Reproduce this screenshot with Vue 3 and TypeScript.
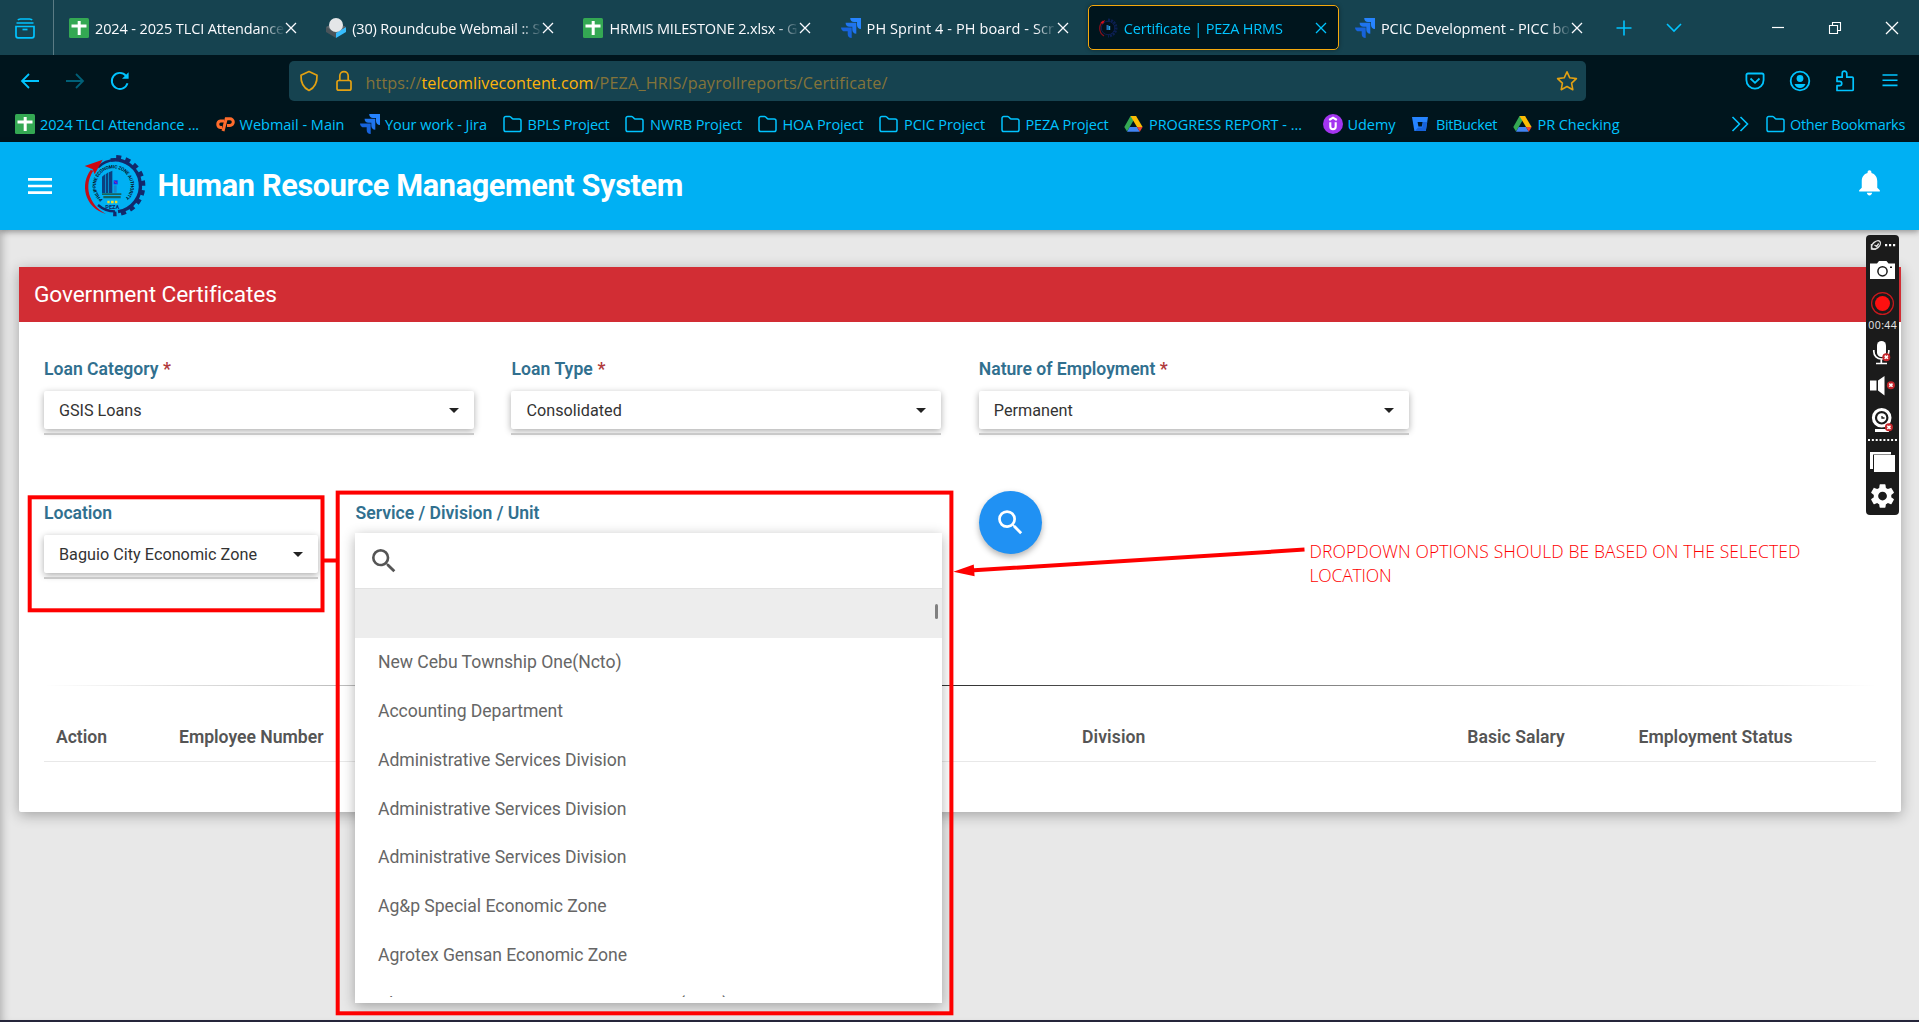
<script setup lang="ts">
import type { Directive } from 'vue'

type IconName = 'sheet' | 'cube' | 'jira' | 'seal' | 'cpanel' | 'folder' | 'drive' | 'udemy' | 'bitbucket'

interface Tab { icon: IconName; title: string; width: number; active?: boolean }
interface Bookmark { icon: IconName; label: string; width: number; extra?: number }
interface Field { label: string; labelWidth: number; value: string; valueWidth: number }

/* Tracks a text run so that it fills the given width. */
const vFit: Directive<HTMLElement, number> = {
  mounted(el, binding) {
    const count = (el.textContent ?? '').length
    const natural = el.getBoundingClientRect().width
    if (count > 0) el.style.letterSpacing = `${(binding.value - natural) / count}px`
  },
}

const tabs: Tab[] = [
  { icon: 'sheet', title: '2024 - 2025 TLCI Attendance', width: 189 },
  { icon: 'cube', title: '(30) Roundcube Webmail :: S', width: 188 },
  { icon: 'sheet', title: 'HRMIS MILESTONE 2.xlsx - G', width: 188 },
  { icon: 'jira', title: 'PH Sprint 4 - PH board - Scr', width: 187.5 },
  { icon: 'seal', title: 'Certificate | PEZA HRMS', width: 159, active: true },
  { icon: 'jira', title: 'PCIC Development - PICC bo', width: 189 },
]

const bookmarks: Bookmark[] = [
  { icon: 'sheet', label: '2024 TLCI Attendance ...', width: 159 },
  { icon: 'cpanel', label: 'Webmail - Main', width: 105 },
  { icon: 'jira', label: 'Your work - Jira', width: 102 },
  { icon: 'folder', label: 'BPLS Project', width: 82 },
  { icon: 'folder', label: 'NWRB Project', width: 92 },
  { icon: 'folder', label: 'HOA Project', width: 81 },
  { icon: 'folder', label: 'PCIC Project', width: 81 },
  { icon: 'folder', label: 'PEZA Project', width: 83 },
  { icon: 'drive', label: 'PROGRESS REPORT - ...', width: 153, extra: 5 },
  { icon: 'udemy', label: 'Udemy', width: 48 },
  { icon: 'bitbucket', label: 'BitBucket', width: 61 },
  { icon: 'drive', label: 'PR Checking', width: 82 },
]

const loanFields: Field[] = [
  { label: 'Loan Category', labelWidth: 114.5, value: 'GSIS Loans', valueWidth: 82.5 },
  { label: 'Loan Type', labelWidth: 81.5, value: 'Consolidated', valueWidth: 95.5 },
  { label: 'Nature of Employment', labelWidth: 176.5, value: 'Permanent', valueWidth: 79 },
]

const options = [
  { text: 'New Cebu Township One(Ncto)', width: 243.5 },
  { text: 'Accounting Department', width: 185 },
  { text: 'Administrative Services Division', width: 248.5 },
  { text: 'Administrative Services Division', width: 248.5 },
  { text: 'Administrative Services Division', width: 248.5 },
  { text: 'Ag&p Special Economic Zone', width: 228.5 },
  { text: 'Agrotex Gensan Economic Zone', width: 249 },
  { text: 'Alaminos Economic Zone Services Area (Aeza)', width: 350 },
]

const columns = [
  { name: 'Action', width: 51 },
  { name: 'Employee Number', width: 144.5 },
  { name: 'Division', width: 63.5 },
  { name: 'Basic Salary', width: 97.5 },
  { name: 'Employment Status', width: 154 },
]
</script>

<template>
  <svg class="defs" width="0" height="0">
    <symbol id="i-sheet" viewBox="0 0 20 20"><rect width="20" height="20" rx="1.5" fill="#34a853" /><path d="M2.5 6.5h15v3h-15zM8.700 3h3v14h-3z" fill="#fff" /></symbol>
    <symbol id="i-cube" viewBox="0 0 20 20"><path d="M0 9l10 5v6L0 14z" fill="#4a545a" /><path d="M20 9l-10 5v6l10-6z" fill="#37beff" /><path d="M0 9l10-5 10 5-10 6z" fill="#5c666c" /><circle cx="10" cy="7" r="7" fill="#e4e6e8" /></symbol>
    <symbol id="i-jira" viewBox="0 0 20 20"><path d="M9.200 0H20v11c-2.600 0-4-1.700-4-4V4h-3C10.800 4 9.200 2.400 9.200 0z" fill="#2684ff" /><path d="M4.600 4.700h10.700v11c-2.500 0-4-1.700-4-4v-3H8.500c-2.400 0-3.900-1.600-3.900-4z" fill="#1f74ee" /><path d="M0 9.400h10.700V20c-2.500 0-4-1.500-4-4v-2.700H4c-2.400 0-4-1.500-4-3.900z" fill="#1763db" /></symbol>
    <symbol id="i-seal" viewBox="0 0 20 20"><path d="M10 2a8 8 0 0 1 0 16" fill="none" stroke="#0b1f52" stroke-width="3" stroke-dasharray="2 1" /><circle cx="10" cy="10" r="6.700" fill="#021018" stroke="#0b1f52" stroke-width="1" /><path d="M5 3C0 8 1 15 6 18" fill="none" stroke="#8f0f1c" stroke-width="1.200" /><path d="M2.500 4.500L7 2 5 6z" fill="#d5101c" /><path d="M8.500 7h2v5h-2z" fill="#1c6fb9" /><path d="M10.500 8h1.700v4h-1.700z" fill="#2fa4dd" /></symbol>
    <symbol id="i-cpanel" viewBox="0 0 20 20"><g fill="none" stroke="#ff6c2c" stroke-width="3"><path d="M9 7H5.500a3.300 3.300 0 0 0 0 6.500H7" /><path d="M8 17l3.200-12.200H15a3.300 3.300 0 0 1 0 6.600h-3" /></g></symbol>
    <symbol id="i-folder" viewBox="0 0 20 20"><path d="M1 15.700V4.300A1.800 1.800 0 0 1 2.800 2.500h3.800c1.900 0 1.900 2.500 3.800 2.500H16.200a1.800 1.800 0 0 1 1.800 1.800v8.900a1.800 1.800 0 0 1-1.800 1.800H2.800A1.800 1.800 0 0 1 1 15.700z" fill="none" stroke="#00c4ff" stroke-width="1.500" /></symbol>
    <symbol id="i-drive" viewBox="0 0 20 20"><path d="M6.500 2h5.600L5.700 13 3 17.600.3 13z" fill="#34a853" /><path d="M6.500 2h5.600l6.500 11h-5.600z" fill="#fbbc04" /><path d="M5.700 13h7.300l2.800 4.800H3z" fill="#4285f4" /><path d="M13 13h5.600l-2.800 4.800z" fill="#ea4335" /></symbol>
    <symbol id="i-udemy" viewBox="0 0 20 20"><circle cx="10" cy="10" r="10" fill="#a435f0" /><path d="M6.200 6L10 3.700 13.800 6M7.300 8.300v4.200a2.700 2.700 0 0 0 5.400 0V8.300" fill="none" stroke="#fff" stroke-width="2.100" /></symbol>
    <symbol id="i-bitbucket" viewBox="0 0 20 20"><path d="M1 3h16l-2.200 14H3.400z" fill="#2684ff" /><path d="M12 8h4.200l-1.400 9H4l3-3.500h4.200z" fill="#1763db" /><path d="M6.600 8h5l-.8 4.600H7.400z" fill="#00151d" /></symbol>
    <symbol id="i-search" viewBox="0 0 24 24"><path d="M15.500 14h-.79l-.28-.27A6.471 6.471 0 0 0 16 9.500 6.500 6.500 0 1 0 9.500 16c1.610 0 3.090-.59 4.230-1.570l.27.28v.79l5 4.990L20.490 19l-4.990-5zm-6 0C7.010 14 5 11.990 5 9.500S7.010 5 9.500 5 14 7.010 14 9.500 11.990 14 9.500 14z" fill="currentColor" /></symbol>
    <symbol id="i-close" viewBox="0 0 12 12"><path d="M1 1l10 10M11 1L1 11" fill="none" stroke="currentColor" stroke-width="1.300" /></symbol>
  </svg>

  <div class="screen">
    <div class="tabstrip">
      <div class="view-button">
        <svg width="22" height="22" viewBox="0 0 22 22" fill="none" stroke="#00c4ff" stroke-width="1.700"><path d="M4 2.200C4.500 1 5.500 1 6.500 1h9c1 0 2 0 2.500 1.200M2.500 5h17M2 8.500h18v9.300a2 2 0 0 1-2 2H4a2 2 0 0 1-2-2z" /><path d="M8.500 11.500h5" /></svg>
      </div>
      <div v-for="tab in tabs" :key="tab.title" class="tab" :class="{ active: tab.active }">
        <svg class="favicon" width="20" height="20"><use :href="'#i-' + tab.icon" /></svg>
        <div class="tab-title"><span v-fit="tab.width">{{ tab.title }}</span></div>
        <svg class="tab-close" width="12" height="12"><use href="#i-close" /></svg>
      </div>
      <svg class="new-tab" width="16" height="16" viewBox="0 0 16 16"><path d="M8 .5v15M.5 8h15" stroke="#00c4ff" stroke-width="1.600" /></svg>
      <svg class="tab-list" width="16" height="16" viewBox="0 0 16 16"><path d="M1 4l7 7 7-7" fill="none" stroke="#00c4ff" stroke-width="1.600" /></svg>
      <div class="window-controls">
        <svg width="14" height="14" viewBox="0 0 14 14"><path d="M1 6.500h12" stroke="#fff" stroke-width="1.200" /></svg>
        <svg width="14" height="14" viewBox="0 0 14 14"><path d="M1.500 4.500h8v8h-8zM4.500 4.500v-3h8v8h-3" fill="none" stroke="#fff" stroke-width="1.100" /></svg>
        <svg width="14" height="14" viewBox="0 0 14 14"><path d="M1 1l12 12M13 1L1 13" stroke="#fff" stroke-width="1.300" /></svg>
      </div>
    </div>

    <div class="toolbar">
      <div class="nav-buttons">
        <svg width="20" height="20" viewBox="0 0 20 20" fill="none" stroke="#00c4ff" stroke-width="1.800"><path d="M9 3L2 10l7 7M2 10h17" /></svg>
        <svg width="20" height="20" viewBox="0 0 20 20" fill="none" stroke="#006078" stroke-width="1.800"><path d="M11 3l7 7-7 7M18 10H1" /></svg>
        <svg width="20" height="20" viewBox="0 0 20 20" fill="none" stroke="#00c4ff" stroke-width="1.900"><path d="M17.500 12.200A8 8 0 1 1 16 4.800" /><path d="M18.600 1.200v6.600H12z" fill="#00c4ff" stroke="none" /></svg>
      </div>
      <div class="urlbar">
        <svg width="20" height="22" viewBox="0 0 20 22" fill="none" stroke="#e3a112" stroke-width="1.700"><path d="M10 1.500l8 3.700c.3 7-2 12.300-8 15.300C4 17.500 1.700 12.200 2 5.200z" stroke-linejoin="round" /></svg>
        <svg width="18" height="22" viewBox="0 0 18 22" fill="none" stroke="#e3a112" stroke-width="1.700"><rect x="2" y="10.500" width="14" height="9.700" rx="1.800" /><path d="M4.800 10.500V5.800a4.200 4.200 0 0 1 8.400 0v4.700" /></svg>
        <div class="url"><span v-fit="56">https://</span><span v-fit="172" class="host">telcomlivecontent.com</span><span v-fit="294">/PEZA_HRIS/payrollreports/Certificate/</span></div>
        <svg class="star" width="22" height="22" viewBox="0 0 22 22"><path d="M11 1.800l2.800 6 6.600.8-4.800 4.500 1.200 6.600L11 16.500l-5.800 3.200 1.200-6.600L1.600 8.600l6.600-.8z" fill="none" stroke="#e3a112" stroke-width="1.600" stroke-linejoin="round" /></svg>
      </div>
      <div class="tool-buttons">
        <svg width="22" height="22" viewBox="0 0 22 22" fill="none" stroke="#00c4ff" stroke-width="1.800"><path d="M4 3.500h14a1.600 1.600 0 0 1 1.600 1.600V10a8.600 8.600 0 0 1-17.200 0V5.100A1.600 1.600 0 0 1 4 3.500z" /><path d="M6.500 8.500l4.500 4.300 4.500-4.300" /></svg>
        <svg width="22" height="22" viewBox="0 0 22 22"><circle cx="11" cy="11" r="9.300" fill="none" stroke="#00c4ff" stroke-width="1.800" /><circle cx="11" cy="8.500" r="3.400" fill="#00c4ff" /><path d="M5.500 14h11c-1 2.600-3 4-5.500 4s-4.500-1.400-5.500-4z" fill="#00c4ff" /></svg>
        <svg width="22" height="22" viewBox="0 0 22 22" fill="none" stroke="#00c4ff" stroke-width="1.700"><path d="M3 20.500v-4.800h2.600a2.100 2.100 0 0 0 0-4.300H3V7.200h5.200V3.500a2.300 2.300 0 0 1 4.600 0v3.700h5.400a1 1 0 0 1 1 1v11.300a1 1 0 0 1-1 1z" stroke-linejoin="round" /></svg>
        <svg width="22" height="22" viewBox="0 0 22 22"><path d="M3.500 5h15M3.500 10.200h15M3.500 15.400h15" stroke="#00c4ff" stroke-width="1.600" /></svg>
      </div>
    </div>

    <div class="bookmarks">
      <div v-for="mark in bookmarks" :key="mark.label" class="bookmark" :style="{ marginRight: 15.5 + (mark.extra ?? 0) + 'px' }">
        <svg width="20" height="20"><use :href="'#i-' + mark.icon" /></svg>
        <span v-fit="mark.width">{{ mark.label }}</span>
      </div>
      <svg class="more" width="18" height="18" viewBox="0 0 18 18"><path d="M1.500 2l7 7-7 7M9.500 2l7 7-7 7" fill="none" stroke="#00c4ff" stroke-width="1.600" /></svg>
      <div class="bookmark">
        <svg width="20" height="20"><use href="#i-folder" /></svg>
        <span v-fit="115">Other Bookmarks</span>
      </div>
    </div>

    <header class="app-header">
      <svg class="menu" width="32" height="32" viewBox="0 0 24 24"><path d="M3 18h18v-2H3v2zm0-5h18v-2H3v2zm0-7v2h18V6H3z" fill="#fff" /></svg>
      <svg class="seal" width="76" height="76" viewBox="0 0 228 228">
        <path d="M98 36A78 78 0 0 1 120 191" fill="none" stroke="#12296b" stroke-width="10" />
        <path d="M110 28A85 85 0 1 1 110 198" fill="none" stroke="#12296b" stroke-width="14" stroke-dasharray="15 13.500" transform="rotate(3 111 113)" />
        <path d="M60 58A77 77 0 0 1 111 36M111 190A77 77 0 0 1 60 171" fill="none" stroke="#12296b" stroke-width="7" />
        <path d="M38 66C6 108 18 178 84 198 30 168 17 112 46 68z" fill="#c40d17" />
        <path d="M20 54L74 35 50 79 44 64z" fill="#d0070f" />
        <path id="seal-arc" d="M74 154A52 52 0 1 1 138 154" fill="none" />
        <text class="seal-ring"><textPath href="#seal-arc" textLength="252">PHILIPPINE ECONOMIC ZONE AUTHORITY</textPath></text>
        <path d="M72 86l9-7v56h-9zM83 79l8-6v62h-8zM93 73l10-5v67H93z" fill="#0b4080" />
        <path d="M107 112h9v22h-9z" fill="#1788cf" />
        <path d="M107 97h12v12h-12z" fill="#1a28ef" /><path d="M110 100l6 6" stroke="#f2304a" stroke-width="3" />
        <path d="M72 136h58v5H72zM76 144h52v7H76z" fill="#19635c" />
        <path d="M88 162h7M99 162h8M111 162h7" stroke="#f0db2a" stroke-width="7" />
        <text class="seal-name" x="82" y="184" textLength="42">PEZA</text>
      </svg>
      <h1><span v-fit="525.500">Human Resource Management System</span></h1>
      <svg class="bell" width="31" height="31" viewBox="0 0 24 24"><path d="M12 22c1.100 0 2-.9 2-2h-4c0 1.100.89 2 2 2zm6-6v-5c0-3.070-1.640-5.640-4.500-6.320V4c0-.83-.67-1.500-1.500-1.500s-1.500.67-1.500 1.500v.68C7.630 5.360 6 7.920 6 11v5l-2 2v1h16v-1l-2-2z" fill="#fff" /></svg>
    </header>

    <main class="page">
      <section class="card">
        <div class="card-title"><span v-fit="242">Government Certificates</span></div>
        <div class="form-row">
          <div v-for="field in loanFields" :key="field.label" class="field">
            <div class="label"><span v-fit="field.labelWidth">{{ field.label }}</span><i>*</i></div>
            <div class="select"><span v-fit="field.valueWidth">{{ field.value }}</span><b class="caret" /></div>
            <div class="underline" />
          </div>
        </div>
        <div class="form-row second">
          <div class="field location">
            <div class="label"><span v-fit="68">Location</span></div>
            <div class="select"><span v-fit="198">Baguio City Economic Zone</span><b class="caret" /></div>
            <div class="underline" />
          </div>
          <div class="field service">
            <div class="label"><span v-fit="184">Service / Division / Unit</span></div>
            <div class="dropdown">
              <div class="filter"><svg width="32" height="32"><use href="#i-search" /></svg></div>
              <div class="options">
                <div class="option blank"><div class="thumb" /></div>
                <div v-for="(option, n) in options" :key="n" class="option"><span v-fit="option.width">{{ option.text }}</span></div>
              </div>
            </div>
          </div>
          <button class="go" type="button"><svg width="33" height="33"><use href="#i-search" /></svg></button>
        </div>
        <div class="divider" />
        <div class="thead">
          <div v-for="column in columns" :key="column.name" class="th">
            <span v-fit="column.width">{{ column.name }}</span>
          </div>
        </div>
      </section>
    </main>
    <div class="taskbar-edge" />

    <svg class="markup" width="1919" height="1022" viewBox="0 0 1919 1022">
      <g fill="none" stroke="#fe0000" stroke-width="4">
        <rect x="29.700" y="497.300" width="292.800" height="113" />
        <rect x="337.700" y="492.600" width="613.700" height="520.700" />
        <path d="M322 560.500h15M970 570.600L1304.500 549.600" />
      </g>
      <path d="M953.300 571.700l20.500-7.200.8 11.700z" fill="#fe0000" />
    </svg>
    <div class="note"><span v-fit="491">DROPDOWN OPTIONS SHOULD BE BASED ON THE SELECTED</span><br><span v-fit="82">LOCATION</span></div>

    <svg class="recorder" width="33" height="280" viewBox="1866 235 33 280">
      <rect x="1866" y="235" width="33" height="280" rx="4" fill="#1b1b1b" />
      <g fill="none" stroke="#ddd" stroke-width="1.400"><ellipse cx="1876" cy="245" rx="5.200" ry="3.200" transform="rotate(-42 1876 245)" /><path d="M1871.500 244v5h4.500M1874.500 245l2.200 1.500 2-3" /></g>
      <path d="M1885 244h2.200v2.200h-2.200zm4 0h2.200v2.200h-2.200zm4 0h2.200v2.200h-2.200z" fill="#fff" />
      <path d="M1870 263.500h7l2-2.500h7.500l2 2.500h6.500V279h-25z" fill="#fff" /><circle cx="1882.500" cy="271.300" r="4.600" fill="#fff" stroke="#1b1b1b" stroke-width="1.500" /><path d="M1890 266.500h2v1.500h-2z" fill="#1b1b1b" />
      <circle cx="1882.500" cy="303.500" r="10.900" fill="none" stroke="#c9191c" stroke-width="1.200" /><circle cx="1882.500" cy="303.500" r="7.500" fill="#fe1010" />
      <text x="1868.300" y="329" textLength="28.500" class="time">00:44</text>
      <rect x="1877" y="341" width="9" height="16" rx="4.500" fill="#fff" /><path d="M1873.800 350v1.500a7.500 7.500 0 0 0 15 0V350M1881.300 358.500v5M1876 363.500h11" fill="none" stroke="#fff" stroke-width="1.700" />
      <path d="M1870 380.500h6.500v10h-6.500zM1878 380.500l6.500-4.500v19.500l-6.500-5z" fill="#fff" />
      <circle cx="1881.700" cy="417.800" r="8.300" fill="none" stroke="#fff" stroke-width="3" /><circle cx="1881.700" cy="417.800" r="4.600" fill="#fff" /><path d="M1882 416v2h2.500" fill="none" stroke="#1b1b1b" stroke-width="1.300" /><path d="M1875 429h14v3h-14z" fill="#fff" />
      <g v-for="badge in [[1886.300, 357.200], [1890.900, 385.200], [1888.900, 427.300]]" :key="badge[0]" :transform="`translate(${badge[0]} ${badge[1]})`">
        <circle r="4" fill="#c4262b" /><path d="M-1.600-1.600l3.200 3.200M1.600-1.600l-3.200 3.200" stroke="#fff" stroke-width="1.500" />
      </g>
      <path d="M1868 440h29" stroke="#fff" stroke-width="2" stroke-dasharray="2 1.850" />
      <path d="M1870 452h21v2.500h-18V469h-3z" fill="#fff" /><path d="M1874 455h21v17h-21z" fill="#fff" />
      <path transform="translate(1867.900 481.400) scale(1.220)" fill="#fff" d="M19.140 12.940c.04-.3.06-.61.06-.94 0-.32-.02-.64-.07-.94l2.030-1.580a.49.49 0 0 0 .12-.61l-1.920-3.320a.488.488 0 0 0-.59-.22l-2.390.96c-.5-.38-1.030-.7-1.620-.94l-.36-2.540a.484.484 0 0 0-.48-.41h-3.840c-.24 0-.43.17-.47.41l-.36 2.540c-.59.24-1.130.57-1.620.94l-2.390-.96c-.22-.08-.47 0-.59.22L2.740 8.870c-.12.21-.08.47.12.61l2.030 1.580c-.05.3-.09.63-.09.94s.02.64.07.94l-2.030 1.580a.49.49 0 0 0-.12.61l1.920 3.320c.12.22.37.29.59.22l2.390-.96c.5.38 1.030.7 1.620.94l.36 2.540c.05.24.24.41.48.41h3.840c.24 0 .44-.17.47-.41l.36-2.540c.59-.24 1.130-.56 1.620-.94l2.390.96c.22.08.47 0 .59-.22l1.920-3.320c.12-.22.07-.47-.12-.61l-2.010-1.580zM12 15.600c-1.980 0-3.600-1.620-3.600-3.600s1.620-3.600 3.600-3.600 3.600 1.620 3.600 3.600-1.620 3.600-3.600 3.600z" />
    </svg>
  </div>
</template>

<style>
body { margin: 0; overflow: hidden; }
</style>

<style scoped>
* { box-sizing: border-box; }
svg { display: block; flex: none; }
.defs { position: absolute; }
.screen {
  position: relative;
  display: flex;
  flex-direction: column;
  width: 1919px;
  height: 1022px;
  overflow: hidden;
  background: #e8e8e8;
  font-family: Roboto, sans-serif;
  white-space: nowrap;
}
.tabstrip, .toolbar, .bookmarks { display: flex; flex: none; align-items: center; font-family: "Open Sans", "Noto Sans", sans-serif; }

.tabstrip { height: 55px; background: #164350; color: #fbfbfe; font-size: 14.500px; }
.view-button { display: flex; align-items: center; width: 54px; height: 55px; padding: 2px 0 0 14px; margin-right: 5px; border-right: 1px solid #5b7b84; }
.tab { display: flex; flex: none; align-items: center; width: 251px; height: 45px; margin-right: 6.200px; padding-left: 9px; border: 1px solid transparent; border-radius: 5px; }
.tab.active { border-color: #f5a90c; background: #00151d; color: #00c4ff; box-shadow: 0 0 4px rgba(0, 0, 0, .4); }
.tab-title { width: 190px; margin-left: 6px; padding-top: 2px; line-height: 24px; -webkit-mask-image: linear-gradient(90deg, #000 168px, transparent 190px); mask-image: linear-gradient(90deg, #000 168px, transparent 190px); }
.tab-close { margin-top: 1px; }
.tab.active .tab-close { margin-left: 1px; }
.new-tab { margin-left: 13.500px; }
.tab-list { margin-left: 34px; }
.window-controls { display: flex; gap: 43px; margin: 0 20px 0 auto; }

.toolbar { height: 52px; background: #00151d; }
.nav-buttons { display: flex; gap: 25px; width: 289px; padding-left: 20px; }
.urlbar { display: flex; align-items: center; width: 1297px; height: 40px; padding-left: 10px; border-radius: 5px; background: #164350; }
.urlbar svg + svg { margin-left: 16px; }
.url { margin: 3px 0 0 12.500px; font-size: 16.200px; line-height: 24px; color: #84743a; }
.host { color: #fdb30b; }
.urlbar .star { margin: 0 8.500px 0 auto; }
.tool-buttons { display: flex; gap: 23px; margin-left: 158px; }

.bookmarks { height: 35px; padding: 0 14px 1px 15px; background: #00151d; color: #00c4ff; font-size: 14.500px; }
.bookmark { display: flex; align-items: center; gap: 5px; }
.bookmark:last-child { gap: 4px; }
.bookmark span { padding-top: 1px; line-height: 24px; }
.more { margin: 0 17px 0 auto; }

.app-header { position: relative; z-index: 1; display: flex; flex: none; align-items: center; height: 88px; background: #00b0f3; box-shadow: 0 2px 6px rgba(0, 0, 0, .35); }
.menu { margin-left: 24px; }
.seal { margin-left: 22px; }
.seal-ring { font: 700 14px Roboto, sans-serif; fill: #07131f; }
.seal-name { font: 700 17px Roboto, sans-serif; fill: #0b2868; }
h1 { margin: 0 0 0 3.500px; color: #fff; font-size: 30.700px; font-weight: 700; line-height: 40px; }
.bell { margin: 0 34.500px 7px auto; }

.page { flex: 1; padding: 37px 18px 0 19px; box-shadow: inset 8px 0 8px -6px rgba(0, 0, 0, .25); }
.card { height: 545px; border-radius: 2px; background: #fff; box-shadow: 0 3px 14px rgba(0, 0, 0, .3); }
.card-title { height: 55px; padding-left: 15px; background: #d22d34; color: #fff; font-size: 22.700px; line-height: 55px; }
.form-row { display: flex; padding: 34px 0 0 25px; }
.form-row.second { padding-top: 65px; }
.field { width: 430px; margin-right: 37.400px; }
.label { height: 35px; color: #31708f; font-size: 17.600px; font-weight: 600; line-height: 26px; }
.label i { margin-left: 4.500px; color: #b03a3c; font-style: normal; }
.select { display: flex; align-items: center; justify-content: space-between; height: 38px; padding: 0 15px; border-radius: 2px; background: #fff; box-shadow: 0 2px 7px rgba(0, 0, 0, .33); color: #333; font-size: 16.200px; }
.caret { width: 0; border: 5.500px solid transparent; border-top-color: #222; border-bottom: 0; }
.underline { position: relative; height: 2px; margin-top: 4px; background: #c9c9c9; }
.location { width: 274px; margin-right: 37.500px; }
.service { position: relative; z-index: 2; width: 586px; }
.dropdown { position: absolute; left: -.5px; top: 33px; width: 587px; height: 470px; background: #fff; box-shadow: 0 3px 12px rgba(0, 0, 0, .3); }
.filter { height: 55px; padding: 12px 0 0 12.500px; color: #555; }
.options { height: 409px; overflow: hidden; border-top: 1px solid #e2e2e2; color: #666; font-size: 17.600px; }
.option { height: 48.800px; padding-left: 23px; line-height: 49px; }
.option.blank { height: 49.200px; background: #ededed; }
.thumb { width: 3px; height: 15px; margin-left: 556.500px; position: relative; top: 15px; border-radius: 2px; background: #808080; }
.go { display: flex; align-items: center; justify-content: center; width: 63px; height: 63px; margin: -9px 0 0 0; padding: 0; border: 0; border-radius: 50%; background: #2091f3; color: #fff; box-shadow: 0 3px 6px rgba(0, 0, 0, .3); }
.divider { height: 1px; margin: 106px 25px 0; background: linear-gradient(90deg, transparent, #333, transparent); }
.thead { display: grid; grid-template-columns: 123px 903px 385.300px 171.200px 1fr; align-items: center; height: 76px; margin: 0 25px; padding: 26px 0 0 12px; border-bottom: 1px solid #e8e8e8; color: #555; font-size: 17.600px; font-weight: 600; }
.th { height: 50px; line-height: 51px; }
.taskbar-edge { height: 2px; background: #25253a; }

.markup { position: absolute; left: 0; top: 0; z-index: 5; }
.note { position: absolute; left: 1309.500px; top: 539px; z-index: 5; color: #fe0000; font-family: "Open Sans", sans-serif; font-size: 17.500px; font-weight: 300; line-height: 24.300px; }
.recorder { position: absolute; left: 1866px; top: 235px; z-index: 6; }
.time { font: 10.500px "Open Sans", sans-serif; fill: #e8e8e8; }
</style>
